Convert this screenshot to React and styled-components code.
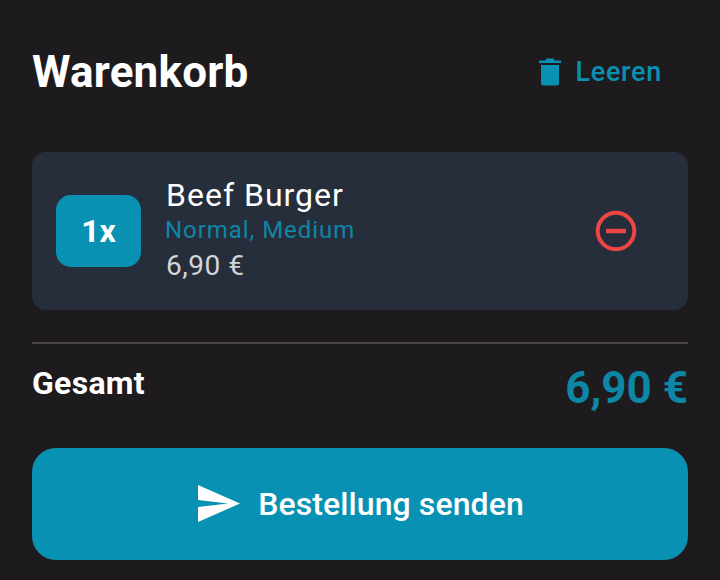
import React from "react";
import styled, { createGlobalStyle } from "styled-components";

const Global = createGlobalStyle`
  html, body { margin: 0; padding: 0; background: #1e1b1f; }
  * { box-sizing: border-box; }
  body { font-family: Roboto, "Noto Sans", sans-serif; }
`;
const Page = styled.div`
  width: 720px; height: 580px; overflow: hidden; background: #1e1b1f;
  padding: 44px 32px 20px; display: flex; flex-direction: column;
`;
const Header = styled.header`
  display: flex; align-items: center; justify-content: space-between; height: 56px;
`;
const Title = styled.h1`
  margin: 0; color: #fff; font-size: 44px; font-weight: 700; line-height: 56px; letter-spacing: 0.2px;
`;
const ClearButton = styled.button`
  display: flex; align-items: center; gap: 15px; border: 0; background: none; padding: 0 26px 0 0;
  color: #0891b2; font: 500 27px/56px Roboto, sans-serif; letter-spacing: 0.7px;
`;
const Card = styled.section`
  margin-top: 52px; height: 158px; background: #272e3b; border-radius: 14px;
  display: flex; align-items: center; padding: 0 51px 0 24px;
`;
const Badge = styled.div`
  width: 85px; height: 72px; border-radius: 15px; background: #0891b2; color: #fff;
  display: flex; align-items: center; justify-content: center; font-size: 32px; font-weight: 700;
`;
const Info = styled.div`
  flex: 1; margin-left: 25px; display: flex; flex-direction: column; margin-top: -1px;
`;
const ItemName = styled.div`
  color: #fff; font-size: 32px; line-height: 35px; letter-spacing: 1px;
`;
const ItemOptions = styled.div`
  color: #0e86a6; font-size: 24px; line-height: 34px; letter-spacing: 0.95px; margin-left: -1px;
`;
const ItemPrice = styled.div`
  color: #d1d5db; font-size: 28px; line-height: 36px; letter-spacing: 0.5px; margin-top: 1px;
`;
const Divider = styled.hr`
  margin: 32px 0 0; border: 0; height: 2px; background: #494548;
`;
const TotalRow = styled.div`
  display: flex; justify-content: space-between; align-items: flex-start; height: 104px;
`;
const TotalLabel = styled.div`
  color: #fff; font-size: 32px; font-weight: 700; line-height: 40px; margin-top: 19px; letter-spacing: 0.3px;
`;
const TotalValue = styled.div`
  color: #0e86a6; font-size: 44px; font-weight: 700; line-height: 56px; margin-top: 16px;
`;
const SendButton = styled.button`
  height: 112px; border: 0; border-radius: 24px; background: #0891b2; color: #fff;
  display: flex; align-items: center; justify-content: center; gap: 18px;
  font: 500 32px/40px Roboto, sans-serif; letter-spacing: 0.1px;
`;

const TrashIcon = () => (
  <svg width="22" height="28" viewBox="0 0 22 28" fill="#0891b2">
    <path d="M7.5 0.5h7l1 2h6a0.7 0.7 0 0 1 0 2.6H0.5a0.7 0.7 0 0 1 0-2.6h6z" />
    <path d="M2 7h18v18a2.5 2.5 0 0 1-2.5 2.5h-13A2.5 2.5 0 0 1 2 25z" />
  </svg>
);
const RemoveIcon = () => (
  <svg width="42" height="42" viewBox="0 0 42 42" fill="none" stroke="#ef4444">
    <circle cx="21" cy="21" r="18.3" strokeWidth="4" />
    <path d="M11 21h20" strokeWidth="4.4" />
  </svg>
);
const SendIcon = () => (
  <svg width="44" height="38" viewBox="0 0 44 38" fill="#fff">
    <path d="M2 0 44 18.5 2 37V22L32 18.5 2 15z" />
  </svg>
);

export default function App() {
  return (
    <Page>
      <Global />
      <Header>
        <Title>Warenkorb</Title>
        <ClearButton><TrashIcon />Leeren</ClearButton>
      </Header>
      <Card>
        <Badge>1x</Badge>
        <Info>
          <ItemName>Beef Burger</ItemName>
          <ItemOptions>Normal, Medium</ItemOptions>
          <ItemPrice>6,90 €</ItemPrice>
        </Info>
        <RemoveIcon />
      </Card>
      <Divider />
      <TotalRow>
        <TotalLabel>Gesamt</TotalLabel>
        <TotalValue>6,90 €</TotalValue>
      </TotalRow>
      <SendButton><SendIcon />Bestellung senden</SendButton>
    </Page>
  );
}
